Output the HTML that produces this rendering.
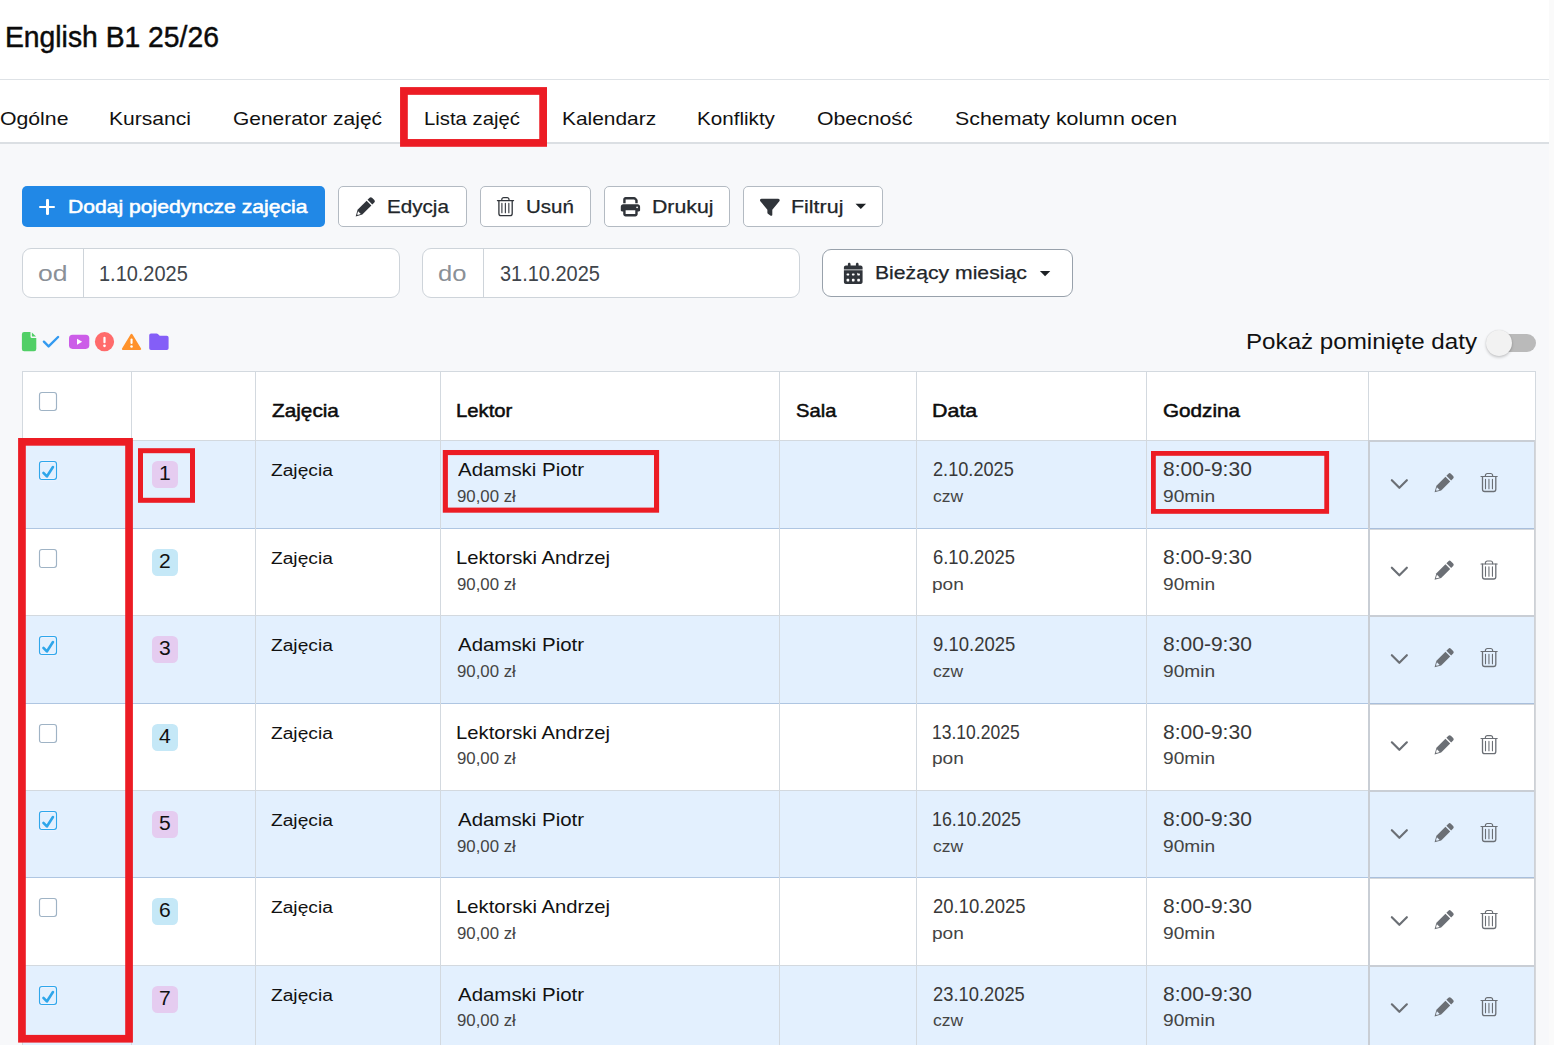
<!DOCTYPE html>
<html lang="pl"><head><meta charset="utf-8"><title>English B1 25/26</title>
<style>
html,body{margin:0;padding:0;}
body{width:1554px;height:1045px;overflow:hidden;position:relative;background:#f7f8fa;font-family:"Liberation Sans",sans-serif;}
.a{position:absolute;box-sizing:border-box;}
.t{position:absolute;white-space:nowrap;line-height:1;transform-origin:0 50%;display:inline-block;}
.btn{position:absolute;box-sizing:border-box;background:#fff;border:1.25px solid #b3bac2;border-radius:5px;top:186px;height:41px;}
.inp{position:absolute;box-sizing:border-box;background:#fff;border:1.25px solid #ced4da;border-radius:9px;top:248.2px;height:49.8px;}
.cb{position:absolute;box-sizing:border-box;width:18.4px;height:18.4px;left:38.8px;background:#fff;border:1.25px solid #9db2c6;border-radius:3.5px;}
.cb.on{border-color:#41a3ea;}
.bd{position:absolute;left:152px;width:26.2px;height:27px;border-radius:5.5px;}
.vl{position:absolute;width:1.1px;background:#d3d9df;}
.hl{position:absolute;height:1.25px;background:#d3d9df;}
svg{position:absolute;overflow:visible;}
.red{position:absolute;box-sizing:border-box;border-style:solid;border-color:#ec1c24;}
</style></head><body>
<div class="a" style="left:0;top:0;width:1549px;height:143px;background:#fff"></div>
<div class="a" style="left:0;top:79px;width:1549px;height:1.3px;background:#dee2e6"></div>
<div class="a" style="left:0;top:142.2px;width:1549px;height:1.9px;background:#dbdfe3"></div>
<div class="a" style="left:1549px;top:0;width:5px;height:1045px;background:#fafafa"></div>
<div class="a" style="left:22px;top:186px;width:303px;height:41px;border-radius:5px;background:#2188e6"></div>
<div class="a" style="left:39.2px;top:205.5px;width:16.1px;height:2.6px;border-radius:1.3px;background:#fff"></div>
<div class="a" style="left:46px;top:198.9px;width:2.6px;height:16px;border-radius:1.3px;background:#fff"></div>
<div class="btn" style="left:338px;width:129px"></div>
<div class="btn" style="left:480.2px;width:110.5px"></div>
<div class="btn" style="left:604px;width:125.9px"></div>
<div class="btn" style="left:743.2px;width:139.4px"></div>
<svg style="left:355px;top:197px" width="20" height="20" viewBox="0 0 20 20"><g transform="translate(0.200 0.000)"><g transform="translate(0.5 19.4) rotate(-45)"><path fill="#30343a" d="M0 0 6 -3.350H18.800V3.350H6z"/><path fill="#fff" d="M2.500 -.450 5.300 -1.900V1.900L2.500 .450z"/><path fill="#30343a" d="M20.100 -3.350H23a1.700 1.700 0 0 1 1.700 1.700V1.650a1.700 1.700 0 0 1-1.700 1.700H20.100z"/></g></g></svg>
<svg style="left:490px;top:190px" width="30" height="32" viewBox="0 0 30 32"><g transform="translate(0.400 0.100)"><g fill="none" stroke="#30343a" stroke-linecap="round" stroke-linejoin="round"><path stroke-width="1.15" d="M7 10.450H23.200"/><path stroke-width="1.2" d="M11.400 10.300V9.400a1.900 1.900 0 0 1 1.900-1.900h3.400a1.900 1.900 0 0 1 1.900 1.900V10.300"/><path stroke-width="1.3" d="M8.500 10.600V23.300a2.200 2.200 0 0 0 2.200 2.200h8.900a2.200 2.200 0 0 0 2.200-2.200V10.600"/><path stroke-width="1.1" d="M11.500 13.300V22.700M14.950 13.300V22.700M18.450 13.300V22.700"/></g></g></svg>
<svg style="left:620px;top:197px" width="19.3" height="19.3" viewBox="0 0 512 512"><g transform="translate(21.223 2.653)"><path fill="#30343a" d="M128 0C92.7 0 64 28.7 64 64v96h64V64H354.7L384 93.3V160h64V93.3c0-17-6.7-33.3-18.7-45.3L400 18.7C388 6.7 371.7 0 354.700 0H128zM384 352v32 64H128V384 368 352H384zm64 32h32c17.7 0 32-14.3 32-32V256c0-35.3-28.7-64-64-64H64c-35.3 0-64 28.7-64 64v96c0 17.7 14.3 32 32 32H64v64c0 35.3 28.7 64 64 64H384c35.3 0 64-28.7 64-64V384zM432 248a24 24 0 1 1 0 48 24 24 0 1 1 0-48z"/></g></svg>
<svg style="left:760px;top:197px" width="19.7" height="19.7" viewBox="0 0 512 512"><g transform="translate(0.000 10.396)"><path fill="#30343a" d="M3.9 54.9C10.5 40.9 24.5 32 40 32H472c15.5 0 29.5 8.9 36.1 22.9s4.6 30.5-5.2 42.5L320 320.900V448c0 12.100-6.800 23.200-17.700 28.600s-23.800 4.300-33.500-3l-64-48c-8.100-6-12.800-15.500-12.800-25.600V320.900L9 97.300C-.7 85.400-2.800 68.800 3.900 54.900z"/></g></svg>
<svg style="left:855px;top:203px" width="10.6" height="5.3" viewBox="0 0 10 5"><g transform="translate(0.472 0.755)"><path fill="#1d2125" d="M0 0h10L5 5z"/></g></svg>
<div class="inp" style="left:21.8px;width:378.2px"></div>
<div class="vl" style="left:82.9px;top:249px;height:48.4px;background:#ced4da"></div>
<div class="inp" style="left:422.2px;width:377.9px"></div>
<div class="vl" style="left:483px;top:249px;height:48.4px;background:#ced4da"></div>
<div class="a" style="left:822.3px;top:249px;width:250.5px;height:47.9px;border-radius:9px;border:1.25px solid #98a1ab;background:#fff"></div>
<svg style="left:843px;top:262px" width="18.7" height="21.4" viewBox="0 0 448 512"><g transform="translate(21.561 16.748)"><path fill="#30343a" d="M128 0c17.700 0 32 14.300 32 32V64H288V32c0-17.700 14.300-32 32-32s32 14.300 32 32V64h48c26.500 0 48 21.500 48 48v48H0V112C0 85.500 21.500 64 48 64H96V32c0-17.700 14.300-32 32-32zM0 179H448V464c0 26.500-21.500 48-48 48H48c-26.500 0-48-21.500-48-48V192zm64 80v32c0 8.800 7.200 16 16 16h32c8.800 0 16-7.200 16-16V272c0-8.800-7.200-16-16-16H80c-8.800 0-16 7.200-16 16zm128 0v32c0 8.800 7.200 16 16 16h32c8.800 0 16-7.200 16-16V272c0-8.800-7.200-16-16-16H208c-8.800 0-16 7.200-16 16zm144-16c-8.800 0-16 7.200-16 16v32c0 8.800 7.200 16 16 16h32c8.800 0 16-7.200 16-16V272c0-8.800-7.200-16-16-16H336zM64 400v32c0 8.800 7.200 16 16 16h32c8.800 0 16-7.200 16-16V400c0-8.800-7.200-16-16-16H80c-8.800 0-16 7.200-16 16zm144-16c-8.800 0-16 7.200-16 16v32c0 8.800 7.200 16 16 16h32c8.800 0 16-7.200 16-16V400c0-8.800-7.200-16-16-16H208zm112 16v32c0 8.800 7.200 16 16 16h32c8.800 0 16-7.200 16-16V400c0-8.800-7.200-16-16-16H336c-8.800 0-16 7.200-16 16z"/></g></svg>
<svg style="left:1039px;top:271px" width="10.4" height="5.2" viewBox="0 0 10 5"><g transform="translate(0.865 0.000)"><path fill="#1d2125" d="M0 0h10L5 5z"/></g></svg>
<svg style="left:21px;top:332px" width="14.4" height="19.2" viewBox="0 0 14.4 19.2"><g transform="translate(0.900 0.100)"><path fill="#51cf66" d="M2.2 0H8.6V4.400a1.500 1.500 0 0 0 1.500 1.500H14.400V17a2.200 2.200 0 0 1-2.200 2.200H2.200A2.200 2.200 0 0 1 0 17V2.200A2.200 2.200 0 0 1 2.200 0z"/><path fill="#51cf66" d="M10 .3 14.100 4.500H10.700a.7.7 0 0 1-.7-.7z"/></g></svg>
<svg style="left:42px;top:335px" width="16.8" height="12.2" viewBox="0 0 16.8 12.200"><g transform="translate(0.600 0.700)"><path fill="none" stroke="#339af0" stroke-width="2.4" stroke-linecap="round" stroke-linejoin="round" d="M1.300 6 6 10.700 15.500 1.300"/></g></svg>
<svg style="left:69px;top:334px" width="20.3" height="14.2" viewBox="0 0 20.3 14.200"><g transform="translate(0.000 0.700)"><rect width="20.3" height="14.2" rx="3.6" fill="#cc5de8"/><path fill="#fff" d="M8 4.100 13.200 7.100 8 10.100z"/></g></svg>
<svg style="left:94px;top:332px" width="19.2" height="19.2" viewBox="0 0 19.2 19.200"><g transform="translate(0.900 0.100)"><circle cx="9.6" cy="9.6" r="9.6" fill="#ff6b6b"/><rect x="8.500" y="4.700" width="2.200" height="6.400" rx="1" fill="#fff"/><circle cx="9.600" cy="13.700" r="1.350" fill="#fff"/></g></svg>
<svg style="left:121px;top:333px" width="19.7" height="16.8" viewBox="0 0 19.7 16.800"><g transform="translate(0.700 0.200)"><path fill="#ff922b" stroke="#ff922b" stroke-width="2" stroke-linejoin="round" d="M9.850 1.600 18.500 15.800H1.200z"/><rect x="8.800" y="5.300" width="2.100" height="5.600" rx="1" fill="#fff"/><circle cx="9.850" cy="13.300" r="1.250" fill="#fff"/></g></svg>
<svg style="left:149px;top:333px" width="19.4" height="16.6" viewBox="0 0 19.4 16.600"><g transform="translate(0.200 0.400)"><path fill="#845ef7" d="M1.800 0H7.400a1.800 1.800 0 0 1 1.300.55L10.500 2.400H17.600a1.800 1.800 0 0 1 1.800 1.800V14.800a1.800 1.800 0 0 1-1.800 1.800H1.800A1.800 1.800 0 0 1 0 14.800V1.800A1.800 1.800 0 0 1 1.800 0z"/></g></svg>
<div class="a" style="left:1489px;top:333.9px;width:47.2px;height:18.2px;border-radius:9.1px;background:#bababa"></div>
<div class="a" style="left:1485.6px;top:329.8px;width:26.4px;height:26.4px;border-radius:50%;background:#f2f2f2;box-shadow:0 1.5px 3px rgba(0,0,0,.2),0 0 1px rgba(0,0,0,.14)"></div>
<div class="a" style="left:22px;top:371px;width:1514.25px;height:700px;background:#fff"></div>
<div class="a" style="left:22px;top:440px;width:1514.25px;height:87.5px;background:#e3f0fe"></div>
<div class="a" style="left:22px;top:615px;width:1514.25px;height:88px;background:#e3f0fe"></div>
<div class="a" style="left:22px;top:790px;width:1514.25px;height:87px;background:#e3f0fe"></div>
<div class="a" style="left:22px;top:965px;width:1514.25px;height:87.5px;background:#e3f0fe"></div>
<div class="hl" style="left:22px;top:371px;width:1514.25px"></div>
<div class="hl" style="left:22px;top:440px;width:1514.25px"></div>
<div class="hl" style="left:22px;top:527.5px;width:1514.25px"></div>
<div class="hl" style="left:22px;top:615px;width:1514.25px"></div>
<div class="hl" style="left:22px;top:703px;width:1514.25px"></div>
<div class="hl" style="left:22px;top:790px;width:1514.25px"></div>
<div class="hl" style="left:22px;top:877px;width:1514.25px"></div>
<div class="hl" style="left:22px;top:965px;width:1514.25px"></div>
<div class="hl" style="left:22px;top:1052.5px;width:1514.25px"></div>
<div class="hl" style="left:22px;top:527.5px;width:1346px;background:#afc6e2"></div>
<div class="hl" style="left:22px;top:703px;width:1346px;background:#afc6e2"></div>
<div class="hl" style="left:22px;top:877px;width:1346px;background:#afc6e2"></div>
<div class="hl" style="left:22px;top:1052.5px;width:1346px;background:#afc6e2"></div>
<div class="vl" style="left:22px;top:371px;height:700px"></div>
<div class="vl" style="left:131px;top:371px;height:700px"></div>
<div class="vl" style="left:255px;top:371px;height:700px"></div>
<div class="vl" style="left:440px;top:371px;height:700px"></div>
<div class="vl" style="left:779px;top:371px;height:700px"></div>
<div class="vl" style="left:916px;top:371px;height:700px"></div>
<div class="vl" style="left:1146px;top:371px;height:700px"></div>
<div class="vl" style="left:1368px;top:371px;height:700px"></div>
<div class="vl" style="left:1535px;top:371px;height:700px"></div>
<div class="a" style="left:1368px;top:440px;width:2px;height:700px;background:#c9ced5"></div>
<div class="a" style="left:1534px;top:440px;width:2px;height:700px;background:linear-gradient(90deg,#c9ced5,#d9dadc)"></div>
<div class="a" style="left:1370px;top:440px;width:164px;height:2px;background:#c9ced5"></div>
<div class="a" style="left:1370px;top:528px;width:164px;height:2px;background:linear-gradient(180deg,#a9bfdc 50%,#d3d7dc 50%)"></div>
<div class="a" style="left:1370px;top:615px;width:164px;height:2px;background:#c9ced5"></div>
<div class="a" style="left:1370px;top:703px;width:164px;height:2px;background:linear-gradient(180deg,#a9bfdc 50%,#d3d7dc 50%)"></div>
<div class="a" style="left:1370px;top:790px;width:164px;height:2px;background:#c9ced5"></div>
<div class="a" style="left:1370px;top:877px;width:164px;height:2px;background:linear-gradient(180deg,#a9bfdc 50%,#d3d7dc 50%)"></div>
<div class="a" style="left:1370px;top:965px;width:164px;height:2px;background:#c9ced5"></div>
<div class="a" style="left:1370px;top:1053px;width:164px;height:2px;background:linear-gradient(180deg,#a9bfdc 50%,#d3d7dc 50%)"></div>
<svg style="left:38px;top:391px" width="19" height="20" viewBox="0 0 19 20"><g transform="translate(0.950 0.950)"><rect x="0.55" y="0.55" width="17" height="18" rx="2.4" fill="#fff" stroke="#9fb3c5" stroke-width="1.15"/></g></svg>
<svg style="left:38px;top:460px" width="19" height="20" viewBox="0 0 19 20"><g transform="translate(0.950 0.950)"><rect x="-0.6" y="-0.6" width="19.3" height="20.3" rx="3.4" fill="none" stroke="#ecf3ff" stroke-width="1"/><rect x="1.6" y="1.6" width="14.9" height="15.9" rx="1.8" fill="none" stroke="#edf4ff" stroke-width="0.9"/><rect x="0.55" y="0.55" width="17" height="18" rx="2.4" fill="none" stroke="#2fa7eb" stroke-width="1.15"/><path fill="none" stroke="#2ea6ea" stroke-width="2.6" stroke-linecap="round" stroke-linejoin="round" d="M4.500 11.900 7.900 15.500 14 6.100"/></g></svg>
<div class="bd" style="top:461.0px;background:#e5ccf0"></div>
<svg style="left:1389px;top:474px" width="20" height="20" viewBox="0 0 16 16"><g transform="translate(0.280 0.080)"><path fill="none" stroke="#6b6f75" stroke-width="1.75" stroke-linecap="round" stroke-linejoin="round" d="M2 4.900 8 10.900 14 4.900"/></g></svg>
<svg style="left:1434px;top:472px" width="20" height="20" viewBox="0 0 20 20"><g transform="translate(0.050 0.900)"><g transform="translate(0.5 19.4) rotate(-45)"><path fill="#6b6f75" d="M0 0 6 -3.350H18.800V3.350H6z"/><path fill="#e3f0fe" d="M2.500 -.450 5.300 -1.900V1.900L2.500 .450z"/><path fill="#6b6f75" d="M20.100 -3.350H23a1.700 1.700 0 0 1 1.700 1.700V1.650a1.700 1.700 0 0 1-1.700 1.700H20.100z"/></g></g></svg>
<svg style="left:1474px;top:466px" width="30" height="32" viewBox="0 0 30 32"><g fill="none" stroke="#6b6f75" stroke-linecap="round" stroke-linejoin="round"><path stroke-width="1.15" d="M7 10.450H23.200"/><path stroke-width="1.2" d="M11.400 10.300V9.400a1.900 1.900 0 0 1 1.900-1.900h3.400a1.900 1.900 0 0 1 1.900 1.900V10.300"/><path stroke-width="1.3" d="M8.500 10.600V23.300a2.200 2.200 0 0 0 2.200 2.200h8.900a2.200 2.200 0 0 0 2.200-2.200V10.600"/><path stroke-width="1.1" d="M11.500 13.300V22.700M14.950 13.300V22.700M18.450 13.300V22.700"/></g></svg>
<svg style="left:38px;top:548px" width="19" height="20" viewBox="0 0 19 20"><g transform="translate(0.950 0.950)"><rect x="0.55" y="0.55" width="17" height="18" rx="2.4" fill="#fff" stroke="#9fb3c5" stroke-width="1.15"/></g></svg>
<div class="bd" style="top:548.5px;background:#c5e8f7"></div>
<svg style="left:1389px;top:561px" width="20" height="20" viewBox="0 0 16 16"><g transform="translate(0.280 0.480)"><path fill="none" stroke="#6b6f75" stroke-width="1.75" stroke-linecap="round" stroke-linejoin="round" d="M2 4.900 8 10.900 14 4.900"/></g></svg>
<svg style="left:1434px;top:560px" width="20" height="20" viewBox="0 0 20 20"><g transform="translate(0.050 0.400)"><g transform="translate(0.5 19.4) rotate(-45)"><path fill="#6b6f75" d="M0 0 6 -3.350H18.800V3.350H6z"/><path fill="#fff" d="M2.500 -.450 5.300 -1.900V1.900L2.500 .450z"/><path fill="#6b6f75" d="M20.100 -3.350H23a1.700 1.700 0 0 1 1.700 1.700V1.650a1.700 1.700 0 0 1-1.700 1.700H20.100z"/></g></g></svg>
<svg style="left:1474px;top:553px" width="30" height="32" viewBox="0 0 30 32"><g transform="translate(0.000 0.500)"><g fill="none" stroke="#6b6f75" stroke-linecap="round" stroke-linejoin="round"><path stroke-width="1.15" d="M7 10.450H23.200"/><path stroke-width="1.2" d="M11.400 10.300V9.400a1.900 1.900 0 0 1 1.900-1.900h3.400a1.900 1.900 0 0 1 1.900 1.900V10.300"/><path stroke-width="1.3" d="M8.500 10.600V23.300a2.200 2.200 0 0 0 2.200 2.200h8.900a2.200 2.200 0 0 0 2.200-2.200V10.600"/><path stroke-width="1.1" d="M11.500 13.300V22.700M14.950 13.300V22.700M18.450 13.300V22.700"/></g></g></svg>
<svg style="left:38px;top:635px" width="19" height="20" viewBox="0 0 19 20"><g transform="translate(0.950 0.950)"><rect x="-0.6" y="-0.6" width="19.3" height="20.3" rx="3.4" fill="none" stroke="#ecf3ff" stroke-width="1"/><rect x="1.6" y="1.6" width="14.9" height="15.9" rx="1.8" fill="none" stroke="#edf4ff" stroke-width="0.9"/><rect x="0.55" y="0.55" width="17" height="18" rx="2.4" fill="none" stroke="#2fa7eb" stroke-width="1.15"/><path fill="none" stroke="#2ea6ea" stroke-width="2.6" stroke-linecap="round" stroke-linejoin="round" d="M4.500 11.900 7.900 15.500 14 6.100"/></g></svg>
<div class="bd" style="top:636.0px;background:#e5ccf0"></div>
<svg style="left:1389px;top:649px" width="20" height="20" viewBox="0 0 16 16"><g transform="translate(0.280 0.080)"><path fill="none" stroke="#6b6f75" stroke-width="1.75" stroke-linecap="round" stroke-linejoin="round" d="M2 4.900 8 10.900 14 4.900"/></g></svg>
<svg style="left:1434px;top:647px" width="20" height="20" viewBox="0 0 20 20"><g transform="translate(0.050 0.900)"><g transform="translate(0.5 19.4) rotate(-45)"><path fill="#6b6f75" d="M0 0 6 -3.350H18.800V3.350H6z"/><path fill="#e3f0fe" d="M2.500 -.450 5.300 -1.900V1.900L2.500 .450z"/><path fill="#6b6f75" d="M20.100 -3.350H23a1.700 1.700 0 0 1 1.700 1.700V1.650a1.700 1.700 0 0 1-1.700 1.700H20.100z"/></g></g></svg>
<svg style="left:1474px;top:641px" width="30" height="32" viewBox="0 0 30 32"><g fill="none" stroke="#6b6f75" stroke-linecap="round" stroke-linejoin="round"><path stroke-width="1.15" d="M7 10.450H23.200"/><path stroke-width="1.2" d="M11.400 10.300V9.400a1.900 1.900 0 0 1 1.900-1.900h3.400a1.900 1.900 0 0 1 1.900 1.900V10.300"/><path stroke-width="1.3" d="M8.500 10.600V23.300a2.200 2.200 0 0 0 2.200 2.200h8.900a2.200 2.200 0 0 0 2.200-2.200V10.600"/><path stroke-width="1.1" d="M11.500 13.300V22.700M14.950 13.300V22.700M18.450 13.300V22.700"/></g></svg>
<svg style="left:38px;top:723px" width="19" height="20" viewBox="0 0 19 20"><g transform="translate(0.950 0.950)"><rect x="0.55" y="0.55" width="17" height="18" rx="2.4" fill="#fff" stroke="#9fb3c5" stroke-width="1.15"/></g></svg>
<div class="bd" style="top:724.0px;background:#c5e8f7"></div>
<svg style="left:1389px;top:736px" width="20" height="20" viewBox="0 0 16 16"><g transform="translate(0.280 0.160)"><path fill="none" stroke="#6b6f75" stroke-width="1.75" stroke-linecap="round" stroke-linejoin="round" d="M2 4.900 8 10.900 14 4.900"/></g></svg>
<svg style="left:1434px;top:735px" width="20" height="20" viewBox="0 0 20 20"><g transform="translate(0.050 0.000)"><g transform="translate(0.5 19.4) rotate(-45)"><path fill="#6b6f75" d="M0 0 6 -3.350H18.800V3.350H6z"/><path fill="#fff" d="M2.500 -.450 5.300 -1.900V1.900L2.500 .450z"/><path fill="#6b6f75" d="M20.100 -3.350H23a1.700 1.700 0 0 1 1.700 1.700V1.650a1.700 1.700 0 0 1-1.700 1.700H20.100z"/></g></g></svg>
<svg style="left:1474px;top:728px" width="30" height="32" viewBox="0 0 30 32"><g transform="translate(0.000 0.100)"><g fill="none" stroke="#6b6f75" stroke-linecap="round" stroke-linejoin="round"><path stroke-width="1.15" d="M7 10.450H23.200"/><path stroke-width="1.2" d="M11.400 10.300V9.400a1.900 1.900 0 0 1 1.900-1.900h3.400a1.900 1.900 0 0 1 1.900 1.900V10.300"/><path stroke-width="1.3" d="M8.500 10.600V23.300a2.200 2.200 0 0 0 2.200 2.200h8.900a2.200 2.200 0 0 0 2.200-2.200V10.600"/><path stroke-width="1.1" d="M11.500 13.300V22.700M14.950 13.300V22.700M18.450 13.300V22.700"/></g></g></svg>
<svg style="left:38px;top:810px" width="19" height="20" viewBox="0 0 19 20"><g transform="translate(0.950 0.950)"><rect x="-0.6" y="-0.6" width="19.3" height="20.3" rx="3.4" fill="none" stroke="#ecf3ff" stroke-width="1"/><rect x="1.6" y="1.6" width="14.9" height="15.9" rx="1.8" fill="none" stroke="#edf4ff" stroke-width="0.9"/><rect x="0.55" y="0.55" width="17" height="18" rx="2.4" fill="none" stroke="#2fa7eb" stroke-width="1.15"/><path fill="none" stroke="#2ea6ea" stroke-width="2.6" stroke-linecap="round" stroke-linejoin="round" d="M4.500 11.900 7.900 15.500 14 6.100"/></g></svg>
<div class="bd" style="top:811.0px;background:#e5ccf0"></div>
<svg style="left:1389px;top:824px" width="20" height="20" viewBox="0 0 16 16"><g transform="translate(0.280 0.080)"><path fill="none" stroke="#6b6f75" stroke-width="1.75" stroke-linecap="round" stroke-linejoin="round" d="M2 4.900 8 10.900 14 4.900"/></g></svg>
<svg style="left:1434px;top:822px" width="20" height="20" viewBox="0 0 20 20"><g transform="translate(0.050 0.900)"><g transform="translate(0.5 19.4) rotate(-45)"><path fill="#6b6f75" d="M0 0 6 -3.350H18.800V3.350H6z"/><path fill="#e3f0fe" d="M2.500 -.450 5.300 -1.900V1.900L2.500 .450z"/><path fill="#6b6f75" d="M20.100 -3.350H23a1.700 1.700 0 0 1 1.700 1.700V1.650a1.700 1.700 0 0 1-1.700 1.700H20.100z"/></g></g></svg>
<svg style="left:1474px;top:816px" width="30" height="32" viewBox="0 0 30 32"><g fill="none" stroke="#6b6f75" stroke-linecap="round" stroke-linejoin="round"><path stroke-width="1.15" d="M7 10.450H23.200"/><path stroke-width="1.2" d="M11.400 10.300V9.400a1.900 1.900 0 0 1 1.900-1.900h3.400a1.900 1.900 0 0 1 1.900 1.900V10.300"/><path stroke-width="1.3" d="M8.500 10.600V23.300a2.200 2.200 0 0 0 2.200 2.200h8.900a2.200 2.200 0 0 0 2.200-2.200V10.600"/><path stroke-width="1.1" d="M11.500 13.300V22.700M14.950 13.300V22.700M18.450 13.300V22.700"/></g></svg>
<svg style="left:38px;top:897px" width="19" height="20" viewBox="0 0 19 20"><g transform="translate(0.950 0.950)"><rect x="0.55" y="0.55" width="17" height="18" rx="2.4" fill="#fff" stroke="#9fb3c5" stroke-width="1.15"/></g></svg>
<div class="bd" style="top:898.0px;background:#c5e8f7"></div>
<svg style="left:1389px;top:911px" width="20" height="20" viewBox="0 0 16 16"><g transform="translate(0.280 0.080)"><path fill="none" stroke="#6b6f75" stroke-width="1.75" stroke-linecap="round" stroke-linejoin="round" d="M2 4.900 8 10.900 14 4.900"/></g></svg>
<svg style="left:1434px;top:909px" width="20" height="20" viewBox="0 0 20 20"><g transform="translate(0.050 0.900)"><g transform="translate(0.5 19.4) rotate(-45)"><path fill="#6b6f75" d="M0 0 6 -3.350H18.800V3.350H6z"/><path fill="#fff" d="M2.500 -.450 5.300 -1.900V1.900L2.500 .450z"/><path fill="#6b6f75" d="M20.100 -3.350H23a1.700 1.700 0 0 1 1.700 1.700V1.650a1.700 1.700 0 0 1-1.700 1.700H20.100z"/></g></g></svg>
<svg style="left:1474px;top:903px" width="30" height="32" viewBox="0 0 30 32"><g fill="none" stroke="#6b6f75" stroke-linecap="round" stroke-linejoin="round"><path stroke-width="1.15" d="M7 10.450H23.200"/><path stroke-width="1.2" d="M11.400 10.300V9.400a1.900 1.900 0 0 1 1.900-1.900h3.400a1.900 1.900 0 0 1 1.900 1.900V10.300"/><path stroke-width="1.3" d="M8.500 10.600V23.300a2.200 2.200 0 0 0 2.200 2.200h8.900a2.200 2.200 0 0 0 2.200-2.200V10.600"/><path stroke-width="1.1" d="M11.500 13.300V22.700M14.950 13.300V22.700M18.450 13.300V22.700"/></g></svg>
<svg style="left:38px;top:985px" width="19" height="20" viewBox="0 0 19 20"><g transform="translate(0.950 0.950)"><rect x="-0.6" y="-0.6" width="19.3" height="20.3" rx="3.4" fill="none" stroke="#ecf3ff" stroke-width="1"/><rect x="1.6" y="1.6" width="14.9" height="15.9" rx="1.8" fill="none" stroke="#edf4ff" stroke-width="0.9"/><rect x="0.55" y="0.55" width="17" height="18" rx="2.4" fill="none" stroke="#2fa7eb" stroke-width="1.15"/><path fill="none" stroke="#2ea6ea" stroke-width="2.6" stroke-linecap="round" stroke-linejoin="round" d="M4.500 11.900 7.900 15.500 14 6.100"/></g></svg>
<div class="bd" style="top:986.0px;background:#e5ccf0"></div>
<svg style="left:1389px;top:998px" width="20" height="20" viewBox="0 0 16 16"><g transform="translate(0.280 0.160)"><path fill="none" stroke="#6b6f75" stroke-width="1.75" stroke-linecap="round" stroke-linejoin="round" d="M2 4.900 8 10.900 14 4.900"/></g></svg>
<svg style="left:1434px;top:997px" width="20" height="20" viewBox="0 0 20 20"><g transform="translate(0.050 0.000)"><g transform="translate(0.5 19.4) rotate(-45)"><path fill="#6b6f75" d="M0 0 6 -3.350H18.800V3.350H6z"/><path fill="#e3f0fe" d="M2.500 -.450 5.300 -1.900V1.900L2.500 .450z"/><path fill="#6b6f75" d="M20.100 -3.350H23a1.700 1.700 0 0 1 1.700 1.700V1.650a1.700 1.700 0 0 1-1.700 1.700H20.100z"/></g></g></svg>
<svg style="left:1474px;top:990px" width="30" height="32" viewBox="0 0 30 32"><g transform="translate(0.000 0.100)"><g fill="none" stroke="#6b6f75" stroke-linecap="round" stroke-linejoin="round"><path stroke-width="1.15" d="M7 10.450H23.200"/><path stroke-width="1.2" d="M11.400 10.300V9.400a1.900 1.900 0 0 1 1.900-1.900h3.400a1.900 1.900 0 0 1 1.900 1.900V10.300"/><path stroke-width="1.3" d="M8.500 10.600V23.300a2.200 2.200 0 0 0 2.200 2.200h8.900a2.200 2.200 0 0 0 2.200-2.200V10.600"/><path stroke-width="1.1" d="M11.500 13.300V22.700M14.950 13.300V22.700M18.450 13.300V22.700"/></g></g></svg>
<span class="t" style="left:5.10px;top:23px;font-size:29.2px;color:#0b0b0b;-webkit-text-stroke:0.45px #0b0b0b;transform:scaleX(0.9693);">English B1 25/26</span>
<span class="t" style="left:-0.11px;top:109px;font-size:19px;color:#111;transform:scaleX(1.1170);">Ogólne</span>
<span class="t" style="left:109.47px;top:109px;font-size:19px;color:#111;transform:scaleX(1.1086);">Kursanci</span>
<span class="t" style="left:232.65px;top:109px;font-size:19px;color:#111;transform:scaleX(1.1022);">Generator zajęć</span>
<span class="t" style="left:423.94px;top:109px;font-size:19px;color:#111;transform:scaleX(1.0682);">Lista zajęć</span>
<span class="t" style="left:561.68px;top:109px;font-size:19px;color:#111;transform:scaleX(1.1004);">Kalendarz</span>
<span class="t" style="left:696.81px;top:109px;font-size:19px;color:#111;transform:scaleX(1.0852);">Konflikty</span>
<span class="t" style="left:817.19px;top:109px;font-size:19px;color:#111;transform:scaleX(1.1171);">Obecność</span>
<span class="t" style="left:955.23px;top:109px;font-size:19px;color:#111;transform:scaleX(1.1243);">Schematy kolumn ocen</span>
<span class="t" style="left:67.77px;top:197px;font-size:19px;color:#fff;-webkit-text-stroke:0.55px #fff;transform:scaleX(1.1112);">Dodaj pojedyncze zajęcia</span>
<span class="t" style="left:386.84px;top:197px;font-size:19px;color:#212529;-webkit-text-stroke:0.25px #212529;transform:scaleX(1.0857);">Edycja</span>
<span class="t" style="left:525.85px;top:197px;font-size:19px;color:#212529;-webkit-text-stroke:0.25px #212529;transform:scaleX(1.0799);">Usuń</span>
<span class="t" style="left:652.09px;top:197px;font-size:19px;color:#212529;-webkit-text-stroke:0.25px #212529;transform:scaleX(1.1201);">Drukuj</span>
<span class="t" style="left:791.48px;top:197px;font-size:19px;color:#212529;-webkit-text-stroke:0.25px #212529;transform:scaleX(1.1285);">Filtruj</span>
<span class="t" style="left:875.40px;top:263px;font-size:19px;color:#212529;-webkit-text-stroke:0.25px #212529;transform:scaleX(1.1145);">Bieżący miesiąc</span>
<span class="t" style="left:37.89px;top:263px;font-size:22px;color:#8a9097;transform:scaleX(1.2058);">od</span>
<span class="t" style="left:98.78px;top:263px;font-size:22px;color:#40454b;transform:scaleX(0.9068);">1.10.2025</span>
<span class="t" style="left:438.33px;top:263px;font-size:22px;color:#8a9097;transform:scaleX(1.1618);">do</span>
<span class="t" style="left:499.94px;top:263px;font-size:22px;color:#40454b;transform:scaleX(0.9073);">31.10.2025</span>
<span class="t" style="left:1246.02px;top:331px;font-size:22px;color:#111;transform:scaleX(1.0983);">Pokaż pominięte daty</span>
<span class="t" style="left:271.71px;top:401px;font-size:19px;color:#0c0c0c;-webkit-text-stroke:0.5px #0c0c0c;transform:scaleX(1.0924);">Zajęcia</span>
<span class="t" style="left:456.30px;top:401px;font-size:19px;color:#0c0c0c;-webkit-text-stroke:0.5px #0c0c0c;transform:scaleX(1.0673);">Lektor</span>
<span class="t" style="left:796.35px;top:401px;font-size:19px;color:#0c0c0c;-webkit-text-stroke:0.5px #0c0c0c;transform:scaleX(1.0619);">Sala</span>
<span class="t" style="left:932.02px;top:401px;font-size:19px;color:#0c0c0c;-webkit-text-stroke:0.5px #0c0c0c;transform:scaleX(1.1284);">Data</span>
<span class="t" style="left:1162.93px;top:401px;font-size:19px;color:#0c0c0c;-webkit-text-stroke:0.5px #0c0c0c;transform:scaleX(1.0878);">Godzina</span>
<span class="t" style="left:159.39px;top:464px;font-size:19.5px;color:#111;transform:scaleX(1.0800);">1</span>
<span class="t" style="left:271.49px;top:462px;font-size:17.3px;color:#111;transform:scaleX(1.1093);">Zajęcia</span>
<span class="t" style="left:457.66px;top:460px;font-size:19px;color:#111;transform:scaleX(1.0757);">Adamski Piotr</span>
<span class="t" style="left:456.91px;top:488px;font-size:16.5px;color:#444;transform:scaleX(1.0172);">90,00 zł</span>
<span class="t" style="left:932.79px;top:459px;font-size:20.2px;color:#383838;transform:scaleX(0.8994);">2.10.2025</span>
<span class="t" style="left:932.76px;top:488px;font-size:16.5px;color:#444;transform:scaleX(1.0590);">czw</span>
<span class="t" style="left:1162.79px;top:459px;font-size:20.2px;color:#383838;transform:scaleX(1.0413);">8:00-9:30</span>
<span class="t" style="left:1162.80px;top:488px;font-size:16.5px;color:#444;transform:scaleX(1.1599);">90min</span>
<span class="t" style="left:159.39px;top:552px;font-size:19.5px;color:#111;transform:scaleX(1.0800);">2</span>
<span class="t" style="left:271.49px;top:550px;font-size:17.3px;color:#111;transform:scaleX(1.1093);">Zajęcia</span>
<span class="t" style="left:456.04px;top:548px;font-size:19px;color:#111;transform:scaleX(1.0652);">Lektorski Andrzej</span>
<span class="t" style="left:456.91px;top:576px;font-size:16.5px;color:#444;transform:scaleX(1.0172);">90,00 zł</span>
<span class="t" style="left:932.76px;top:547px;font-size:20.2px;color:#383838;transform:scaleX(0.9131);">6.10.2025</span>
<span class="t" style="left:932.27px;top:576px;font-size:16.5px;color:#444;transform:scaleX(1.1577);">pon</span>
<span class="t" style="left:1162.79px;top:547px;font-size:20.2px;color:#383838;transform:scaleX(1.0413);">8:00-9:30</span>
<span class="t" style="left:1162.80px;top:576px;font-size:16.5px;color:#444;transform:scaleX(1.1599);">90min</span>
<span class="t" style="left:159.39px;top:639px;font-size:19.5px;color:#111;transform:scaleX(1.0800);">3</span>
<span class="t" style="left:271.49px;top:637px;font-size:17.3px;color:#111;transform:scaleX(1.1093);">Zajęcia</span>
<span class="t" style="left:457.66px;top:635px;font-size:19px;color:#111;transform:scaleX(1.0757);">Adamski Piotr</span>
<span class="t" style="left:456.91px;top:663px;font-size:16.5px;color:#444;transform:scaleX(1.0172);">90,00 zł</span>
<span class="t" style="left:932.83px;top:634px;font-size:20.2px;color:#383838;transform:scaleX(0.9169);">9.10.2025</span>
<span class="t" style="left:932.76px;top:663px;font-size:16.5px;color:#444;transform:scaleX(1.0590);">czw</span>
<span class="t" style="left:1162.79px;top:634px;font-size:20.2px;color:#383838;transform:scaleX(1.0413);">8:00-9:30</span>
<span class="t" style="left:1162.80px;top:663px;font-size:16.5px;color:#444;transform:scaleX(1.1599);">90min</span>
<span class="t" style="left:159.39px;top:727px;font-size:19.5px;color:#111;transform:scaleX(1.0800);">4</span>
<span class="t" style="left:271.49px;top:725px;font-size:17.3px;color:#111;transform:scaleX(1.1093);">Zajęcia</span>
<span class="t" style="left:456.04px;top:723px;font-size:19px;color:#111;transform:scaleX(1.0652);">Lektorski Andrzej</span>
<span class="t" style="left:456.91px;top:750px;font-size:16.5px;color:#444;transform:scaleX(1.0172);">90,00 zł</span>
<span class="t" style="left:932.37px;top:722px;font-size:20.2px;color:#383838;transform:scaleX(0.8676);">13.10.2025</span>
<span class="t" style="left:932.27px;top:750px;font-size:16.5px;color:#444;transform:scaleX(1.1577);">pon</span>
<span class="t" style="left:1162.79px;top:722px;font-size:20.2px;color:#383838;transform:scaleX(1.0413);">8:00-9:30</span>
<span class="t" style="left:1162.80px;top:750px;font-size:16.5px;color:#444;transform:scaleX(1.1599);">90min</span>
<span class="t" style="left:159.39px;top:814px;font-size:19.5px;color:#111;transform:scaleX(1.0800);">5</span>
<span class="t" style="left:271.49px;top:812px;font-size:17.3px;color:#111;transform:scaleX(1.1093);">Zajęcia</span>
<span class="t" style="left:457.66px;top:810px;font-size:19px;color:#111;transform:scaleX(1.0757);">Adamski Piotr</span>
<span class="t" style="left:456.91px;top:838px;font-size:16.5px;color:#444;transform:scaleX(1.0172);">90,00 zł</span>
<span class="t" style="left:932.35px;top:809px;font-size:20.2px;color:#383838;transform:scaleX(0.8798);">16.10.2025</span>
<span class="t" style="left:932.76px;top:838px;font-size:16.5px;color:#444;transform:scaleX(1.0590);">czw</span>
<span class="t" style="left:1162.79px;top:809px;font-size:20.2px;color:#383838;transform:scaleX(1.0413);">8:00-9:30</span>
<span class="t" style="left:1162.80px;top:838px;font-size:16.5px;color:#444;transform:scaleX(1.1599);">90min</span>
<span class="t" style="left:159.39px;top:901px;font-size:19.5px;color:#111;transform:scaleX(1.0800);">6</span>
<span class="t" style="left:271.49px;top:899px;font-size:17.3px;color:#111;transform:scaleX(1.1093);">Zajęcia</span>
<span class="t" style="left:456.04px;top:897px;font-size:19px;color:#111;transform:scaleX(1.0652);">Lektorski Andrzej</span>
<span class="t" style="left:456.91px;top:925px;font-size:16.5px;color:#444;transform:scaleX(1.0172);">90,00 zł</span>
<span class="t" style="left:932.77px;top:896px;font-size:20.2px;color:#383838;transform:scaleX(0.9165);">20.10.2025</span>
<span class="t" style="left:932.27px;top:925px;font-size:16.5px;color:#444;transform:scaleX(1.1577);">pon</span>
<span class="t" style="left:1162.79px;top:896px;font-size:20.2px;color:#383838;transform:scaleX(1.0413);">8:00-9:30</span>
<span class="t" style="left:1162.80px;top:925px;font-size:16.5px;color:#444;transform:scaleX(1.1599);">90min</span>
<span class="t" style="left:159.39px;top:989px;font-size:19.5px;color:#111;transform:scaleX(1.0800);">7</span>
<span class="t" style="left:271.49px;top:987px;font-size:17.3px;color:#111;transform:scaleX(1.1093);">Zajęcia</span>
<span class="t" style="left:457.66px;top:985px;font-size:19px;color:#111;transform:scaleX(1.0757);">Adamski Piotr</span>
<span class="t" style="left:456.91px;top:1012px;font-size:16.5px;color:#444;transform:scaleX(1.0172);">90,00 zł</span>
<span class="t" style="left:932.78px;top:984px;font-size:20.2px;color:#383838;transform:scaleX(0.9084);">23.10.2025</span>
<span class="t" style="left:932.76px;top:1012px;font-size:16.5px;color:#444;transform:scaleX(1.0590);">czw</span>
<span class="t" style="left:1162.79px;top:984px;font-size:20.2px;color:#383838;transform:scaleX(1.0413);">8:00-9:30</span>
<span class="t" style="left:1162.80px;top:1012px;font-size:16.5px;color:#444;transform:scaleX(1.1599);">90min</span>
<svg style="left:0;top:0" width="1554" height="1045" viewBox="0 0 1554 1045" fill="none" stroke="#ec1c24"><rect x="403.93" y="90.97" width="139.20" height="51.95" stroke-width="7.75"/><rect x="21.95" y="441.85" width="107.10" height="596.90" stroke-width="7.7"/><rect x="140.50" y="450.70" width="52.00" height="49.60" stroke-width="5"/><rect x="445.35" y="452.55" width="211.20" height="57.60" stroke-width="5.1"/><rect x="1153.40" y="453.40" width="173.30" height="58.00" stroke-width="4.8"/></svg>
</body></html>
